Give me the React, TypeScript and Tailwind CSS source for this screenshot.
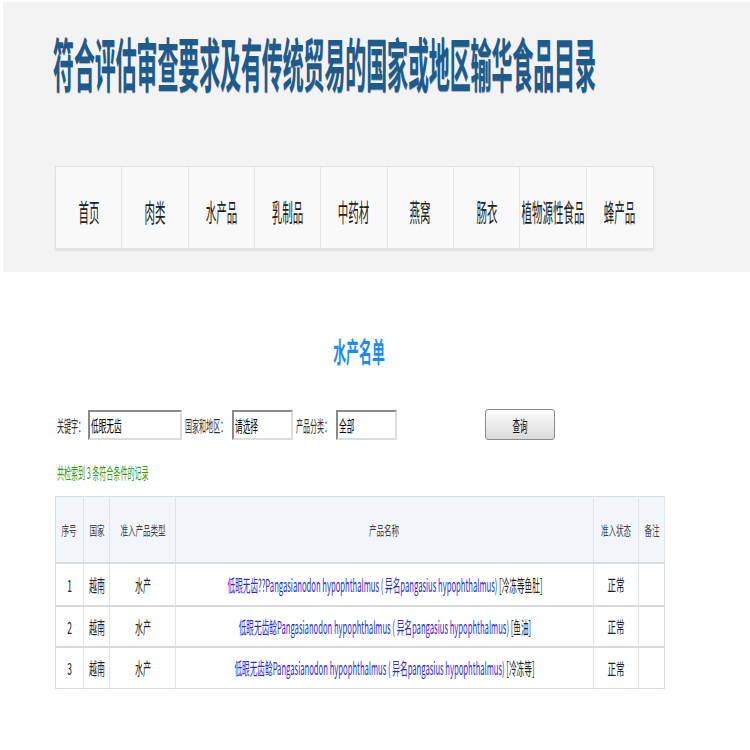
import React from "react";

const navItems = ["首页", "肉类", "水产品", "乳制品", "中药材", "燕窝", "肠衣", "植物源性食品", "蜂产品"];

const rows = [
  { no: "1", name: "低眼无齿??Pangasianodon hypophthalmus ( 异名pangasius hypophthalmus)", tag: "[冷冻等鱼肚]", h: "h-[43px]" },
  { no: "2", name: "低眼无齿鲶Pangasianodon hypophthalmus ( 异名pangasius hypophthalmus)", tag: "[鱼油]", h: "h-[41px]" },
  { no: "3", name: "低眼无齿鲶Pangasianodon hypophthalmus ( 异名pangasius hypophthalmus)", tag: "[冷冻等]", h: "h-[42px]" },
];

// the page was shot squeezed sideways, so every text is pinched with scale-x
function Sq({ children, className }: { children: React.ReactNode; className: string }) {
  return <span className={`inline-block whitespace-nowrap ${className}`}>{children}</span>;
}

function Field({ value, width }: { value: string; width: string }) {
  return (
    <div
      className={`${width} h-[30px] bg-white border-2 border-t-[#8a8a8a] border-l-[#8a8a8a] border-b-[#dcdcdc] border-r-[#dcdcdc] flex items-center overflow-hidden`}
    >
      <div className="w-0 pl-[1px]">
        <Sq className="origin-left scale-x-[0.48] text-[16px] text-black leading-none">{value}</Sq>
      </div>
    </div>
  );
}

function Label({ text, width }: { text: string; width: string }) {
  return (
    <div className={`${width} flex`}>
      <Sq className="origin-left scale-x-[0.44] text-[16px] text-[#333] leading-none">{text}</Sq>
    </div>
  );
}

function Cell({ children, last = false }: { children?: React.ReactNode; last?: boolean }) {
  return (
    <td className={`p-0 ${last ? "" : "border-r border-[#e4e4e4]"}`}>
      <div className="flex justify-center items-center">{children}</div>
    </td>
  );
}

export default function App() {
  return (
    <div className="min-h-[750px] bg-white overflow-hidden font-['Noto_Sans_CJK_SC','Noto_Sans',sans-serif]">
      <header className="ml-[3px] mt-[2px] bg-[#f3f3f3] pt-[31px] pb-[23px] pl-[50px]">
        <h1 className="h-[58px] flex text-[58px] leading-[58px] font-bold text-[#1d5b8c] [text-shadow:1px_1px_1px_rgba(0,0,0,0.25)]">
          <Sq className="origin-left scale-x-[0.36]">符合评估审查要求及有传统贸易的国家或地区输华食品目录</Sq>
        </h1>
        <nav className="mt-[75px] ml-[2px] w-[599px] h-[83px] grid grid-cols-9 bg-[#f9f9f9] border border-[#e2e2e2] shadow-[0_2px_2px_rgba(0,0,0,0.08)]">
          {navItems.map((n, i) => (
            <div
              key={n}
              className={`flex items-center justify-center pt-[8px] ${i < navItems.length - 1 ? "border-r border-[#e6e6e6]" : ""}`}
            >
              <Sq className="scale-x-[0.42] text-[25px] leading-none text-[#222]">{n}</Sq>
            </div>
          ))}
        </nav>
      </header>

      <main className="ml-[55px] w-[609px]">
        <h2 className="mt-[65px] h-[28px] flex justify-center">
          <Sq className="scale-x-[0.46] text-[28px] leading-[28px] font-bold text-[#1a8cf0]">水产名单</Sq>
        </h2>

        <div className="mt-[44px] flex items-center h-[31px] pl-[2px]">
          <Label text="关键字：" width="w-[31px]" />
          <Field value="低眼无齿" width="w-[94px]" />
          <div className="w-[3px]" />
          <Label text="国家和地区：" width="w-[47px]" />
          <Field value="请选择" width="w-[61px]" />
          <div className="w-[3px]" />
          <Label text="产品分类：" width="w-[40px]" />
          <Field value="全部" width="w-[61px]" />
          <button className="ml-[88px] w-[70px] h-[31px] rounded-[3px] border border-[#8c8c8c] bg-gradient-to-b from-[#fdfdfd] to-[#dadada] flex items-center justify-center">
            <Sq className="scale-x-[0.47] text-[16px] leading-none text-[#111]">查询</Sq>
          </button>
        </div>

        <div className="mt-[23px] pl-[2px] h-[17px] flex items-center">
          <Sq className="origin-left scale-x-[0.44] text-[16px] leading-none text-[#2f9a16]">共检索到 3 条符合条件的记录</Sq>
        </div>

        <table className="mt-[16px] w-[609px] table-fixed border-collapse border border-[#d8dde3]">
          <colgroup>
            <col className="w-[28px]" />
            <col className="w-[26px]" />
            <col className="w-[66px]" />
            <col className="w-[418px]" />
            <col className="w-[45px]" />
            <col className="w-[26px]" />
          </colgroup>
          <thead>
            <tr className="h-[66px] bg-[#f2f6fa] border-b-2 border-[#d9dcdf]">
              {["序号", "国家", "准入产品类型", "产品名称", "准入状态", "备注"].map((h) => (
                <th key={h} className="border-r border-[#e1e5ea] font-normal p-0">
                  <div className="flex justify-center">
                    <Sq className="scale-x-[0.58] text-[13px] leading-none text-[#444]">{h}</Sq>
                  </div>
                </th>
              ))}
            </tr>
          </thead>
          <tbody>
            {rows.map((r, i) => (
              <tr key={r.no} className={`${r.h} ${i < rows.length - 1 ? "border-b-2 border-[#d9d9d9]" : ""}`}>
                <Cell>
                  <Sq className="scale-x-[0.5] text-[17px] leading-none text-[#222]">{r.no}</Sq>
                </Cell>
                <Cell>
                  <Sq className="scale-x-[0.47] text-[17px] leading-none text-[#222]">越南</Sq>
                </Cell>
                <Cell>
                  <Sq className="scale-x-[0.47] text-[17px] leading-none text-[#222]">水产</Sq>
                </Cell>
                <Cell>
                  <Sq className="scale-x-[0.45] text-[17px] leading-none">
                    <span className="text-[#2a2ad6]">{r.name}</span>{" "}
                    <span className="text-[#222]">{r.tag}</span>
                  </Sq>
                </Cell>
                <Cell>
                  <Sq className="scale-x-[0.53] text-[16px] leading-none text-[#222]">正常</Sq>
                </Cell>
                <Cell last />
              </tr>
            ))}
          </tbody>
        </table>
      </main>
    </div>
  );
}
